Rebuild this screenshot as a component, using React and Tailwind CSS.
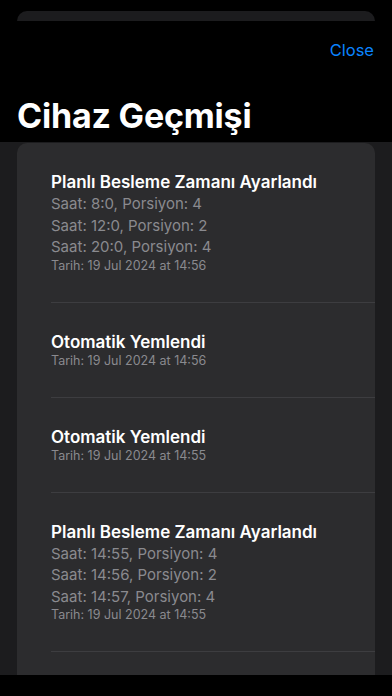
import React from "react";

const items = [
  {
    title: "Planlı Besleme Zamanı Ayarlandı",
    lines: ["Saat: 8:0, Porsiyon: 4", "Saat: 12:0, Porsiyon: 2", "Saat: 20:0, Porsiyon: 4"],
    date: "Tarih: 19 Jul 2024 at 14:56",
  },
  { title: "Otomatik Yemlendi", lines: [], date: "Tarih: 19 Jul 2024 at 14:56" },
  { title: "Otomatik Yemlendi", lines: [], date: "Tarih: 19 Jul 2024 at 14:55" },
  {
    title: "Planlı Besleme Zamanı Ayarlandı",
    lines: ["Saat: 14:55, Porsiyon: 4", "Saat: 14:56, Porsiyon: 2", "Saat: 14:57, Porsiyon: 4"],
    date: "Tarih: 19 Jul 2024 at 14:55",
  },
];

export default function App() {
  return (
    <div
      className="w-full h-[696px] bg-black flex flex-col overflow-hidden"
      style={{ fontFamily: "Inter, 'Noto Sans', sans-serif" }}
    >
      <div className="mt-[11px] mx-[17px] h-[10px] rounded-t-[10px] bg-[#1c1c1e] shrink-0" />
      <div className="flex justify-end pr-[18px] pt-[18px] shrink-0">
        <span className="text-[16.5px] leading-[22px] text-[#0a84ff]">Close</span>
      </div>
      <div className="px-[17px] pt-[35px] h-[81px] shrink-0">
        <h1 className="text-[34px] leading-[40px] font-bold text-white tracking-[-0.2px]">Cihaz Geçmişi</h1>
      </div>
      <div className="flex-1 bg-[#1c1c1e] px-[17px] pt-px min-h-0">
        <div className="h-full bg-[#2c2c2e] rounded-t-[10px] overflow-hidden">
          {items.map((it, i) => (
            <div key={i}>
              {i > 0 && <div className="ml-[34px] h-px bg-[#3d3d40]" />}
              <div className="pl-[34px] pr-4 pt-[28px] pb-[28px]">
                <div className="text-[17px] leading-[22px] font-semibold text-white">{it.title}</div>
                {it.lines.map((l, j) => (
                  <div key={j} className="text-[15px] leading-[21.5px] text-[#8a8a8f]">
                    {l}
                  </div>
                ))}
                <div className="text-[12.5px] leading-[16px] text-[#8a8a8f]">{it.date}</div>
              </div>
            </div>
          ))}
          <div className="ml-[34px] h-px bg-[#3d3d40]" />
        </div>
      </div>
      <div className="h-[21px] bg-black shrink-0" />
    </div>
  );
}
